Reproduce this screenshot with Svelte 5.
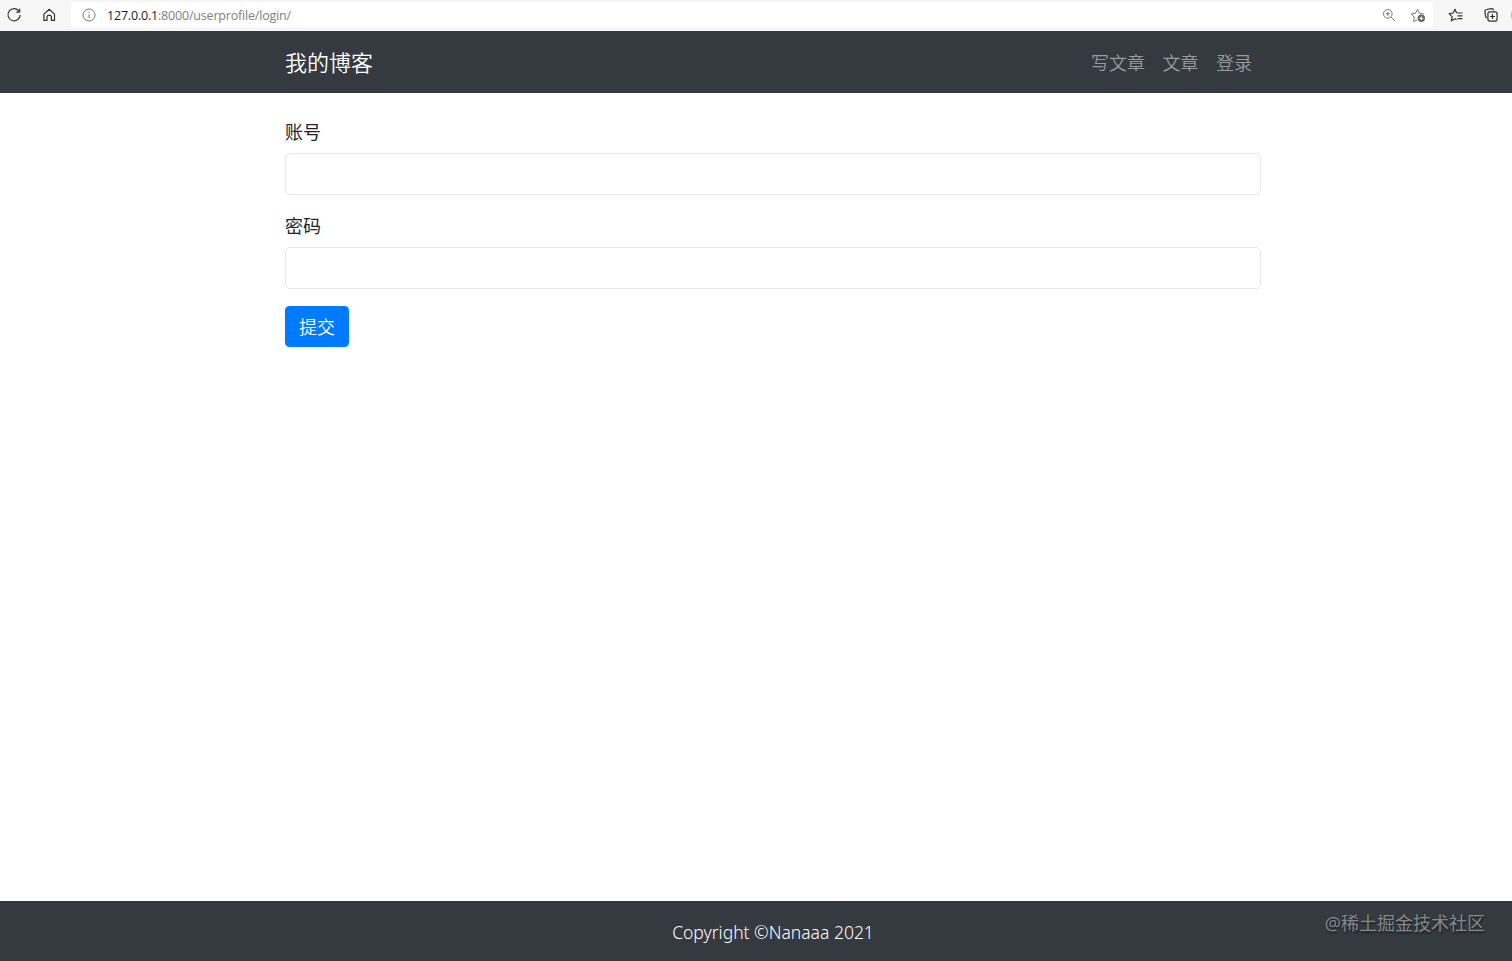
<script>
  let username = "";
  let password = "";

  const links = ["写文章", "文章", "登录"];

  const handleSubmit = () => {
    if (!username || !password) return;
    password = "";
  };
</script>

<div class="window">
  <div class="toolbar">
    <button class="tool reload" aria-label="reload">
      <svg width="16" height="16" viewBox="0 0 16 16">
        <path d="M13.2 4.4A6.1 6.1 0 1 0 14.2 8M13.6 1.8v3.3h-3.4" />
      </svg>
    </button>
    <button class="tool home" aria-label="home">
      <svg width="16" height="16" viewBox="0 0 16 16">
        <path d="M2.9 7.1L8.2 2.3l5.3 4.8v6.3h-3.1V9.8A1.4 1.4 0 0 0 9 8.4H7.4A1.4 1.4 0 0 0 6 9.8v3.6H2.9z" />
      </svg>
    </button>

    <div class="address">
      <svg class="info" width="14" height="14" viewBox="0 0 14 14">
        <circle cx="7" cy="7" r="6" />
        <path d="M7 6.2v4M7 3.7v1.2" />
      </svg>
      <span class="url"><b>127.0.0.1</b>:8000/userprofile/login/</span>
      <svg class="zoom" width="14" height="14" viewBox="0 0 14 14">
        <circle cx="5.8" cy="5.8" r="4.3" />
        <path d="M9 9l4 4M5.8 3.8v4M3.8 5.8h4" />
      </svg>
      <svg class="star" width="16" height="16" viewBox="0 0 16 16">
        <path d="M7 13l-3.4 1.5.6-4.3L1.3 7l4.2-.7L7.5 2.3l2 4 4.3.7" />
        <circle cx="11.3" cy="11.3" r="3.7" class="fill" />
        <path d="M11.3 9.4v3.8M9.4 11.3h3.8" class="plus" />
      </svg>
    </div>

    <button class="tool favorites" aria-label="favorites">
      <svg width="16" height="16" viewBox="0 0 16 16">
        <path d="M8.6 6L7 2.3 5.2 6l-4 .6 2.9 3-.7 4.2L7 11.8l1.6.9M9 6h5.5M9.5 8.8h5M9.5 11.6h5" />
      </svg>
    </button>
    <button class="tool collections" aria-label="collections">
      <svg width="16" height="16" viewBox="0 0 16 16">
        <path d="M3.9 11.1a3 3 0 0 1-1.3-1.8L1.9 5a2.2 2.2 0 0 1 1.8-2.5l4.6-.8a2.2 2.2 0 0 1 2.4 1.5" />
        <rect x="4.9" y="4.9" width="9.2" height="9.2" rx="2" />
        <path d="M9.5 7v5M7 9.5h5" />
      </svg>
    </button>
    <span class="avatar"></span>
  </div>

  <div class="page">
    <nav class="navbar">
      <div class="container nav-row">
        <a class="brand" href="#home">我的博客</a>
        <div class="nav-links">
          {#each links as link}
            <a href="#{link}">{link}</a>
          {/each}
        </div>
      </div>
    </nav>

    <main class="container">
      <form on:submit|preventDefault={handleSubmit}>
        <div class="form-group">
          <label for="username">账号</label>
          <input id="username" type="text" bind:value={username} />
        </div>
        <div class="form-group">
          <label for="password">密码</label>
          <input id="password" type="password" bind:value={password} />
        </div>
        <button class="submit-btn" type="submit">提交</button>
      </form>
    </main>

    <footer>
      <p>Copyright ©Nanaaa 2021</p>
    </footer>
  </div>

  <span class="watermark">@稀土掘金技术社区</span>
</div>

<style>
  :global(body) {
    margin: 0;
  }

  .window {
    position: relative;
    display: flex;
    flex-direction: column;
    height: 961px;
    overflow: hidden;
    background-color: #fff;
    font-family: "Open Sans", "Noto Sans CJK SC", sans-serif;
  }

  /* browser bar */
  .toolbar {
    display: flex;
    align-items: center;
    flex: none;
    height: 31px;
    box-sizing: border-box;
    padding: 0 0 1px 6px;
    overflow: hidden;
    background-color: #f6f6f6;
  }

  svg {
    display: block;
    flex: none;
    fill: none;
    stroke: #333;
    stroke-width: 1.2;
    stroke-linejoin: round;
  }

  .tool {
    padding: 0;
    border: none;
    background: none;
    flex: none;
  }

  .home {
    margin-left: 19px;
  }

  .address {
    display: flex;
    align-items: center;
    flex: none;
    width: 1362px;
    height: 26px;
    margin-left: 14px;
    padding: 0 7px 0 11px;
    box-sizing: border-box;
    border-radius: 2px;
    background-color: #fff;
  }

  .address svg {
    stroke: #777;
    stroke-width: 1;
  }

  .url {
    flex: 1;
    margin-left: 11px;
    padding-top: 1px;
    font-size: 12.5px;
    line-height: 20px;
    letter-spacing: -0.19px;
    color: #808080;
  }

  .url b {
    font-weight: 400;
    color: #1b1b1b;
  }

  .star {
    margin-left: 14px;
  }

  .address .fill {
    fill: #666;
    stroke: none;
  }

  .address .plus {
    stroke: #fff;
  }

  .favorites {
    margin-left: 15px;
  }

  .collections {
    margin-left: 19px;
  }

  .avatar {
    flex: none;
    width: 18px;
    height: 18px;
    margin-left: 12px;
    border-radius: 50%;
    background-color: #b5b5b5;
  }

  /* the page is a little wider than the window */
  .page {
    display: flex;
    flex-direction: column;
    flex: 1;
    width: 1546px;
    color: #212529;
    font-size: 18px;
    line-height: 27px;
  }

  .container {
    width: 976px;
    margin: 0 auto;
  }

  .navbar {
    height: 62px;
    background-color: #343a40;
  }

  .nav-row {
    display: flex;
    align-items: center;
    justify-content: space-between;
    height: 62px;
  }

  .nav-row a {
    text-decoration: none;
  }

  .brand {
    font-size: 22px;
    color: #fff;
    font-weight: 350;
  }

  .nav-links {
    display: flex;
    gap: 17.5px;
    padding: 2px 9px 0 0;
    font-weight: 350;
  }

  .nav-links a {
    color: #999c9f;
  }

  main {
    flex: 1;
    padding-top: 26px;
  }

  .form-group {
    margin-bottom: 18px;
  }

  label {
    display: block;
    margin-bottom: 7px;
  }

  input {
    display: block;
    width: 100%;
    height: 42px;
    padding: 6px 13px;
    box-sizing: border-box;
    border: 1px solid #e6e8ea;
    border-radius: 5px;
    background-color: #fff;
    font: inherit;
  }

  .submit-btn {
    display: block;
    width: 64px;
    height: 41px;
    margin-top: -1px;
    padding: 2px 0 0;
    border: none;
    border-radius: 4.5px;
    background-color: #007bff;
    color: #fff;
    font: inherit;
    font-weight: 350;
    cursor: pointer;
  }

  footer {
    height: 60px;
    background-color: #343a40;
    color: #fff;
    text-align: center;
  }

  footer p {
    margin: 18px 0 0;
    font-family: "Noto Sans", "Open Sans", sans-serif;
    font-size: 17.5px;
    font-weight: 350;
    letter-spacing: 0;
  }

  .watermark {
    position: absolute;
    right: 27px;
    bottom: 24px;
    font-size: 18px;
    line-height: 27px;
    color: #85888b;
    text-shadow: 1px 2px 2px rgba(0, 0, 0, 0.45);
  }
</style>
